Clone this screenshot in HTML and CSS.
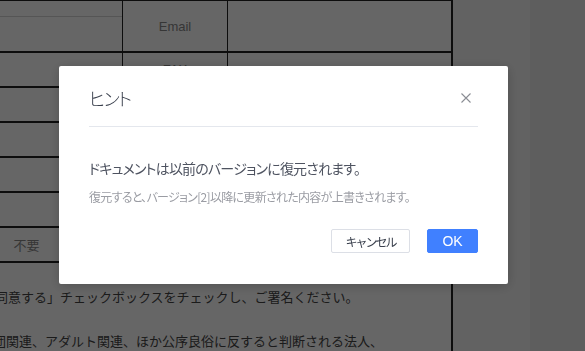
FILE: index.html
```html
<!DOCTYPE html>
<html lang="ja">
<head>
    <meta charset="UTF-8">
    <meta name="viewport" content="width=device-width, initial-scale=1.0">
    <title>同意書</title>
    <link rel="stylesheet" href="styles.css">
</head>
<body>
    <div class="workspace">
        <div class="page">
            <div class="sheet">
                <div class="row row-head">
                    <div class="cell"><div class="cell-split"></div></div>
                    <div class="cell">Email</div>
                    <div class="cell"></div>
                </div>
                <div class="row">
                    <div class="cell"></div>
                    <div class="cell">FAX</div>
                    <div class="cell"></div>
                </div>
                <div class="row">
                    <div class="cell"></div>
                    <div class="cell"></div>
                    <div class="cell"></div>
                </div>
                <div class="row">
                    <div class="cell"></div>
                    <div class="cell"></div>
                    <div class="cell"></div>
                </div>
                <div class="row">
                    <div class="cell"></div>
                    <div class="cell"></div>
                    <div class="cell"></div>
                </div>
                <div class="row">
                    <div class="cell"></div>
                    <div class="cell"></div>
                    <div class="cell"></div>
                </div>
                <div class="row">
                    <div class="cell">不要</div>
                    <div class="cell"></div>
                    <div class="cell"></div>
                </div>
            </div>
            <div class="notes">
                <p class="note-lead">「同意する」チェックボックスをチェックし、ご署名ください。</p>
                <p>暴力団関連、アダルト関連、ほか公序良俗に反すると判断される法人、</p>
            </div>
        </div>
        <div class="gutter"></div>
        <div class="side"></div>
    </div>

    <div class="mask">
        <div class="dialog">
            <div class="dialog-header">
                <span class="dialog-title">ヒント</span>
                <button class="dialog-close" type="button" aria-label="close">
                    <svg width="10" height="10" viewBox="0 0 10 10">
                        <path d="M0.5 0.5 L9.5 9.5 M9.5 0.5 L0.5 9.5" stroke="#8a8d94" stroke-width="1.1" fill="none"/>
                    </svg>
                </button>
            </div>
            <div class="dialog-body">
                <p class="dialog-msg">ドキュメントは以前のバージョンに復元されます。</p>
                <p class="dialog-sub">復元すると、バージョン[2]以降に更新された内容が上書きされます。</p>
            </div>
            <div class="dialog-footer">
                <button class="btn btn-cancel" type="button">キャンセル</button>
                <button class="btn btn-ok" type="button">OK</button>
            </div>
        </div>
    </div>
</body>
</html>
```

FILE: styles.css
```css
body {
    font-family: "Noto Sans CJK JP", "Liberation Sans", sans-serif;
    margin: 0;
    padding: 0;
    overflow: hidden;
    height: 351px;
}
.workspace {
    display: flex;
    height: 100%;
}
.page {
    width: 520px;
    margin-left: -69px;
    flex-shrink: 0;
    background-color: #fff;
    border-right: 2px solid #222;
}
.gutter {
    flex: 1;
    background-color: #f5f5f5;
}
.side {
    width: 55px;
    background-color: #ebebeb;
}

/* table */
.sheet {
    border-top: 1px solid #222;
}
.row {
    display: grid;
    grid-template-columns: 192px 105px 1fr;
    height: 35px;
    box-sizing: border-box;
    border-bottom: 2px solid #222;
}
.row-head {
    height: 52px;
}
.cell {
    display: flex;
    align-items: center;
    justify-content: center;
    font-family: "Liberation Sans", "Noto Sans CJK JP", sans-serif;
    font-size: 13px;
    color: #888;
    border-right: 1px solid #222;
}
.cell:last-child {
    border-right: none;
}
.row-head .cell:first-child {
    align-items: flex-start;
}
.cell-split {
    width: 100%;
    height: 15px;
    border-bottom: 1px solid #d4d4d4;
}
.notes {
    padding: 23px 0 0 36px;
    font-size: 13px;
    line-height: 22px;
    color: #444;
}
.notes p {
    margin: 0 0 22px;
    white-space: nowrap;
}
.notes .note-lead {
    text-indent: 15px;
}

/* dialog */
.mask {
    position: fixed;
    top: 0;
    left: 0;
    right: 0;
    bottom: 0;
    background-color: rgba(0, 0, 0, 0.6);
    display: flex;
    align-items: flex-start;
    padding: 66px 0 0 59px;
}
.dialog {
    width: 449px;
    box-sizing: border-box;
    padding: 0 30px 31px;
    background-color: #fff;
    border-radius: 2px;
    box-shadow: 0 2px 12px rgba(0, 0, 0, 0.2);
    font-feature-settings: "palt";
}
.dialog-header {
    display: flex;
    align-items: center;
    justify-content: space-between;
    padding: 20px 0 16px;
    border-bottom: 1px solid #e4e7ed;
}
.dialog-title {
    font-size: 18px;
    line-height: 24px;
    letter-spacing: -1.5px;
    font-weight: 300;
    color: #3a404d;
}
.dialog-close {
    width: 24px;
    height: 24px;
    padding: 0;
    border: none;
    background: none;
    display: flex;
    align-items: center;
    justify-content: center;
    cursor: pointer;
}
.dialog-body {
    padding-top: 31px;
}
.dialog-msg {
    margin: 0;
    font-size: 14px;
    line-height: 20px;
    letter-spacing: -0.8px;
    color: #4e5360;
}
.dialog-sub {
    margin: 11px 0 0;
    font-size: 12px;
    line-height: 16px;
    letter-spacing: -0.7px;
    color: #9a9ca3;
}
.dialog-footer {
    display: flex;
    justify-content: flex-end;
    gap: 17px;
    margin-top: 24px;
}
.btn {
    height: 24px;
    box-sizing: border-box;
    border-radius: 2px;
    font-family: inherit;
    cursor: pointer;
}
.btn-cancel {
    width: 79px;
    font-size: 12px;
    letter-spacing: -2px;
    color: #3a404d;
    background-color: #fff;
    border: 1px solid #dcdfe6;
}
.btn-ok {
    width: 51px;
    font-family: "Liberation Sans", sans-serif;
    font-size: 14px;
    color: #fff;
    background-color: #4080ff;
    border: 1px solid #4080ff;
}
```
